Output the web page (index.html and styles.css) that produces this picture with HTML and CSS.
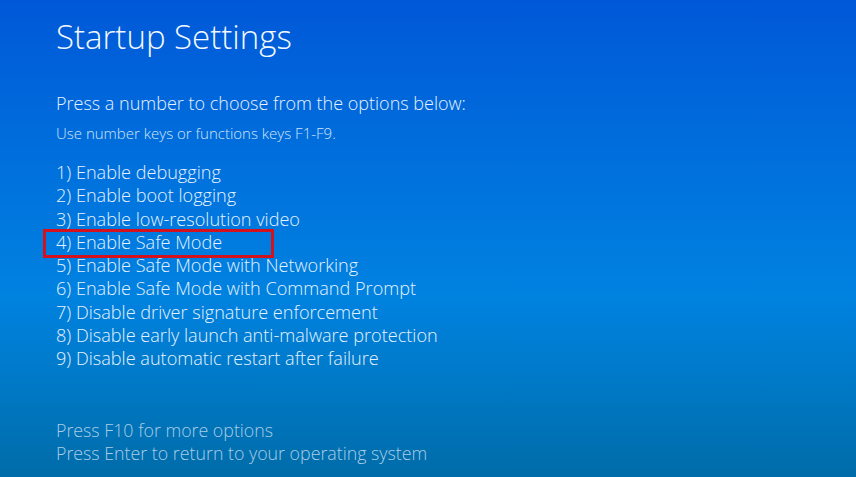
FILE: index.html
```html
<!DOCTYPE html>
<html>
<head>
<meta charset="utf-8">
<link rel="stylesheet" href="styles.css">
</head>
<body>
<div class="screen">
  <h1 class="title">Startup Settings</h1>
  <p class="prompt">Press a number to choose from the options below:</p>
  <p class="hint">Use number keys or functions keys F1-F9.</p>
  <ul class="options">
    <li>1) Enable debugging</li>
    <li>2) Enable boot logging</li>
    <li>3) Enable low-resolution video</li>
    <li class="selected">4) Enable Safe Mode</li>
    <li>5) Enable Safe Mode with Networking</li>
    <li>6) Enable Safe Mode with Command Prompt</li>
    <li>7) Disable driver signature enforcement</li>
    <li>8) Disable early launch anti-malware protection</li>
    <li>9) Disable automatic restart after failure</li>
  </ul>
  <div class="footer">
    <p>Press F10 for more options</p>
    <p>Press Enter to return to your operating system</p>
  </div>
</div>
</body>
</html>
```
FILE: styles.css
```css
html, body {
  margin: 0;
  padding: 0;
}
body {
  width: 856px;
  height: 477px;
  overflow: hidden;
  background: linear-gradient(to bottom, #0058d8 0%, #006ddc 30%, #0082e0 62%, #0078c4 82%, #006ca8 100%);
  font-family: "Open Sans", "Liberation Sans", sans-serif;
  font-weight: 300;
  color: #e6f2ff;
}
.screen {
  padding: 14px 0 0 56px;
  display: flex;
  flex-direction: column;
}
.title {
  margin: 0;
  font-size: 33px;
  font-weight: 300;
  line-height: 46px;
  color: #f2f8ff;
}
.prompt {
  margin: 31px 0 0 0;
  font-size: 18px;
  line-height: 24px;
}
.hint {
  margin: 8px 0 0 0;
  font-size: 15px;
  line-height: 20px;
  color: #cfe4f8;
}
.options {
  list-style: none;
  margin: 18px 0 0 0;
  padding: 0;
  font-size: 18.1px;
  line-height: 23.3px;
}
.options li {
  position: relative;
}
.options li.selected::before {
  content: "";
  position: absolute;
  left: -13px;
  top: -2px;
  width: 225px;
  height: 23px;
  border: 3px solid #d4121e;
}
.footer {
  margin-top: 48px;
  font-size: 17.8px;
  line-height: 23.3px;
  color: #a9cde6;
}
.footer p {
  margin: 0;
}
```
